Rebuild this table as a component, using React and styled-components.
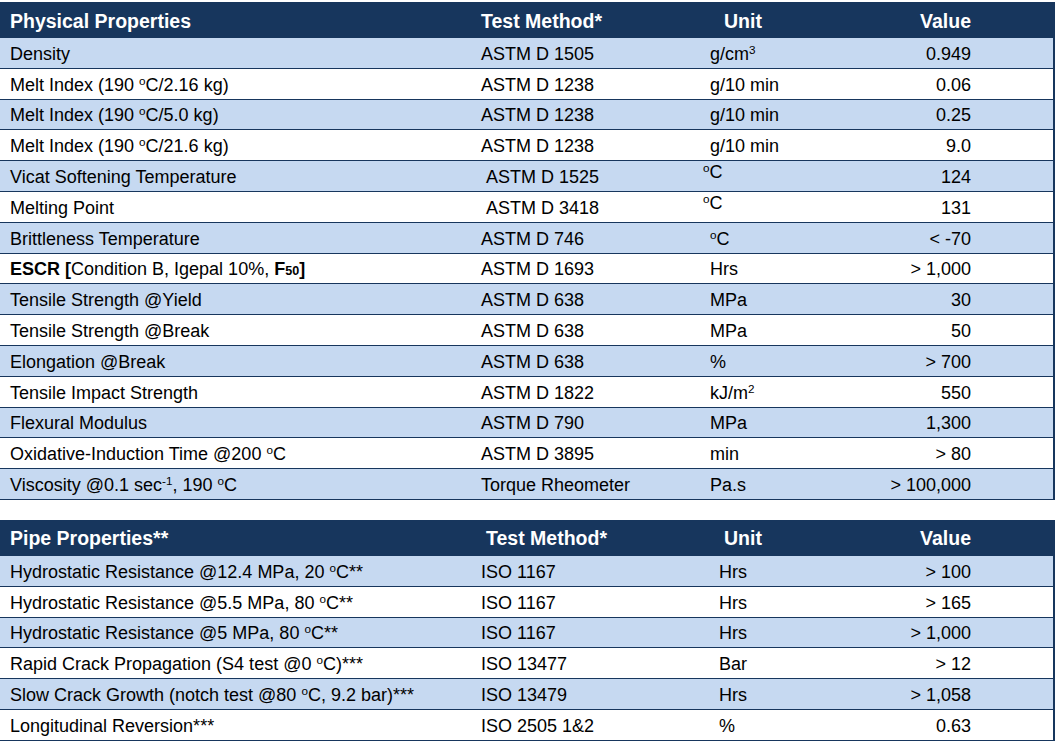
import React from 'react'
import styled, { createGlobalStyle } from 'styled-components'

const NAVY = '#17365d'
const LIGHT = '#c6d9f1'

const GlobalStyle = createGlobalStyle`
  html, body { margin: 0; padding: 0; background: #fff; }
  body { font-family: "Liberation Sans", Arial, sans-serif; color: #000; }
`

const Page = styled.div`
  padding-top: 2px;
  display: flex;
  flex-direction: column;
  gap: 20px;
`

const Table = styled.div`
  width: 1055px;
  box-sizing: border-box;
  border-right: 2px solid ${NAVY};
`

const Row = styled.div`
  display: grid;
  grid-template-columns: 471px 229px 170px 1fr;
  align-items: center;
  box-sizing: border-box;
  height: 30.8px;
  padding-top: 3px;
  border-bottom: 1px solid ${NAVY};
  background: ${(p) => (p.$light ? LIGHT : '#fff')};
  font-size: 18px;
  white-space: nowrap;
`

const HeadRow = styled(Row)`
  height: 36px;
  padding-top: 2px;
  background: ${NAVY};
  color: #fff;
  font-weight: bold;
  font-size: 19.5px;
  border-bottom: none;
  margin-right: -2px;
`

const Cell = styled.div`
  padding-left: ${(p) => p.$pad ?? 10}px;
  position: relative;
  top: ${(p) => (p.$raise ? -p.$raise : 0)}px;
`

const Value = styled.div`
  text-align: right;
  padding-right: ${(p) => p.$pad ?? 82}px;
`

const Sup = styled.span`
  font-size: 0.65em;
  vertical-align: 0.55em;
  line-height: 0;
`

const Sub = styled.span`
  font-size: 0.7em;
`

const B = styled.b``

const Deg = () => <Sup>o</Sup>

const physical = [
  ['Density', 'ASTM D 1505', <>g/cm<Sup>3</Sup></>, '0.949'],
  [<>Melt Index (190 <Deg />C/2.16 kg)</>, 'ASTM D 1238', 'g/10 min', '0.06'],
  [<>Melt Index (190 <Deg />C/5.0 kg)</>, 'ASTM D 1238', 'g/10 min', '0.25'],
  [<>Melt Index (190 <Deg />C/21.6 kg)</>, 'ASTM D 1238', 'g/10 min', '9.0'],
  ['Vicat Softening Temperature', 'ASTM D 1525', <><Deg />C</>, '124', { mPad: 15, uPad: 3, raise: 5 }],
  ['Melting Point', 'ASTM D 3418', <><Deg />C</>, '131', { mPad: 15, uPad: 3, raise: 5 }],
  ['Brittleness Temperature', 'ASTM D 746', <><Deg />C</>, '< -70'],
  [
    <><B>ESCR [</B>Condition B, Igepal 10%, <B>F<Sub>50</Sub>]</B></>,
    'ASTM D 1693', 'Hrs', '> 1,000',
  ],
  ['Tensile Strength @Yield', 'ASTM D 638', 'MPa', '30'],
  ['Tensile Strength @Break', 'ASTM D 638', 'MPa', '50'],
  ['Elongation @Break', 'ASTM D 638', '%', '> 700'],
  ['Tensile Impact Strength', 'ASTM D 1822', <>kJ/m<Sup>2</Sup></>, '550'],
  ['Flexural Modulus', 'ASTM D 790', 'MPa', '1,300'],
  [<>Oxidative-Induction Time @200 <Deg />C</>, 'ASTM D 3895', 'min', '> 80'],
  [<>Viscosity @0.1 sec<Sup>-1</Sup>, 190 <Deg />C</>, 'Torque Rheometer', 'Pa.s', '> 100,000'],
]

const pipe = [
  [<>Hydrostatic Resistance @12.4 MPa, 20 <Deg />C**</>, 'ISO 1167', 'Hrs', '> 100'],
  [<>Hydrostatic Resistance @5.5 MPa, 80 <Deg />C**</>, 'ISO 1167', 'Hrs', '> 165'],
  [<>Hydrostatic Resistance @5 MPa, 80 <Deg />C**</>, 'ISO 1167', 'Hrs', '> 1,000'],
  [<>Rapid Crack Propagation (S4 test @0 <Deg />C)***</>, 'ISO 13477', 'Bar', '> 12'],
  [<>Slow Crack Growth (notch test @80 <Deg />C, 9.2 bar)***</>, 'ISO 13479', 'Hrs', '> 1,058'],
  ['Longitudinal Reversion***', 'ISO 2505 1&2', '%', '0.63'],
]

const PropTable = ({ title, methodPad, unitPad, rows }) => (
  <Table>
    <HeadRow>
      <Cell>{title}</Cell>
      <Cell $pad={methodPad}>Test Method*</Cell>
      <Cell $pad={24}>Unit</Cell>
      <Value $pad={84}>Value</Value>
    </HeadRow>
    {rows.map(([name, method, unit, value, opts = {}], i) => (
      <Row key={i} $light={i % 2 === 0}>
        <Cell>{name}</Cell>
        <Cell $pad={opts.mPad ?? 10}>{method}</Cell>
        <Cell $pad={opts.uPad ?? unitPad} $raise={opts.raise}>{unit}</Cell>
        <Value>{value}</Value>
      </Row>
    ))}
  </Table>
)

const App = () => (
  <>
    <GlobalStyle />
    <Page>
      <PropTable title="Physical Properties" methodPad={10} unitPad={10} rows={physical} />
      <PropTable title="Pipe Properties**" methodPad={15} unitPad={19} rows={pipe} />
    </Page>
  </>
)

export default App
